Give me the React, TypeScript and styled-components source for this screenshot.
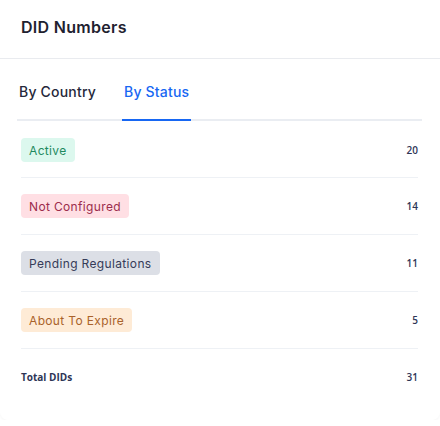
import styled, { createGlobalStyle } from "styled-components";

const GlobalStyle = createGlobalStyle`
  html, body {
    margin: 0;
    padding: 0;
    background: #ffffff;
  }
  body {
    font-family: "Inter", "Noto Sans", sans-serif;
  }
`;

type Tone = "green" | "red" | "gray" | "orange";

const tones: Record<Tone, { bg: string; fg: string }> = {
  green: { bg: "#dcf8ee", fg: "#1f8a5f" },
  red: { bg: "#ffdfe4", fg: "#9c2c4c" },
  gray: { bg: "#dcdfe6", fg: "#363b58" },
  orange: { bg: "#feebd6", fg: "#a9622a" },
};

const rows: { label: string; tone: Tone; count: number }[] = [
  { label: "Active", tone: "green", count: 20 },
  { label: "Not Configured", tone: "red", count: 14 },
  { label: "Pending Regulations", tone: "gray", count: 11 },
  { label: "About To Expire", tone: "orange", count: 5 },
];

const App = () => {
  const total = 31;
  return (
    <>
      <GlobalStyle />
      <Card>
        <Header>
          <Title>DID Numbers</Title>
        </Header>
        <Tabs>
          <Tab>By Country</Tab>
          <Tab $active>By Status</Tab>
        </Tabs>
        <List>
          {rows.map((r) => (
            <Row key={r.label}>
              <Badge $tone={r.tone}>{r.label}</Badge>
              <Count>{r.count}</Count>
            </Row>
          ))}
          <TotalRow>
            <TotalLabel>Total DIDs</TotalLabel>
            <Count>{total}</Count>
          </TotalRow>
        </List>
      </Card>
    </>
  );
};

const Card = styled.div`
  width: 440px;
  height: 420px;
  background: #fff;
  border-radius: 0 0 8px 8px;
  box-shadow: 0 1px 3px rgba(0, 0, 0, 0.04);
  box-sizing: border-box;
`;

const Header = styled.div`
  height: 59px;
  padding: 0 21px 4px;
  display: flex;
  align-items: center;
  border-bottom: 1px solid #e9ebef;
  box-sizing: border-box;
`;

const Title = styled.h2`
  margin: 0;
  font-size: 16px;
  font-weight: 600;
  color: #1f2230;
  letter-spacing: 0.3px;
`;

const Tabs = styled.div`
  margin: 0 18px 0 17px;
  height: 62px;
  display: flex;
  gap: 24px;
  border-bottom: 2px solid #eaedf2;
  box-sizing: border-box;
`;

const Tab = styled.div<{ $active?: boolean }>`
  display: flex;
  align-items: center;
  padding: 4px 2px 0;
  font-size: 14px;
  font-weight: 500;
  letter-spacing: 0.2px;
  color: ${(p) => (p.$active ? "#1767f3" : "#25283a")};
  border-bottom: 2px solid ${(p) => (p.$active ? "#1767f3" : "transparent")};
  margin-bottom: -2px;
`;

const List = styled.div`
  margin: 0 22px 0 21px;
  padding-top: 16px;
`;

const Row = styled.div`
  height: 57px;
  display: flex;
  justify-content: space-between;
  align-items: flex-start;
  padding-top: 16px;
  border-bottom: 1px solid #eef1f5;
  box-sizing: border-box;
  &:first-child {
    height: 41px;
    padding-top: 1px;
  }
`;

const Badge = styled.span<{ $tone: Tone }>`
  display: inline-flex;
  align-items: center;
  height: 24px;
  padding: 0 8px;
  border-radius: 4px;
  font-size: 12px;
  font-weight: 400;
  letter-spacing: 0.35px;
  background: ${(p) => tones[p.$tone].bg};
  color: ${(p) => tones[p.$tone].fg};
`;

const Count = styled.span`
  font-family: "Open Sans", "Noto Sans", sans-serif;
  font-size: 10px;
  font-weight: 600;
  color: #2e3556;
  line-height: 24px;
`;

const TotalRow = styled.div`
  height: 55px;
  display: flex;
  justify-content: space-between;
  align-items: center;
`;

const TotalLabel = styled.span`
  font-family: "Open Sans", "Noto Sans", sans-serif;
  font-size: 10px;
  font-weight: 700;
  color: #2e3556;
`;

export default App;
